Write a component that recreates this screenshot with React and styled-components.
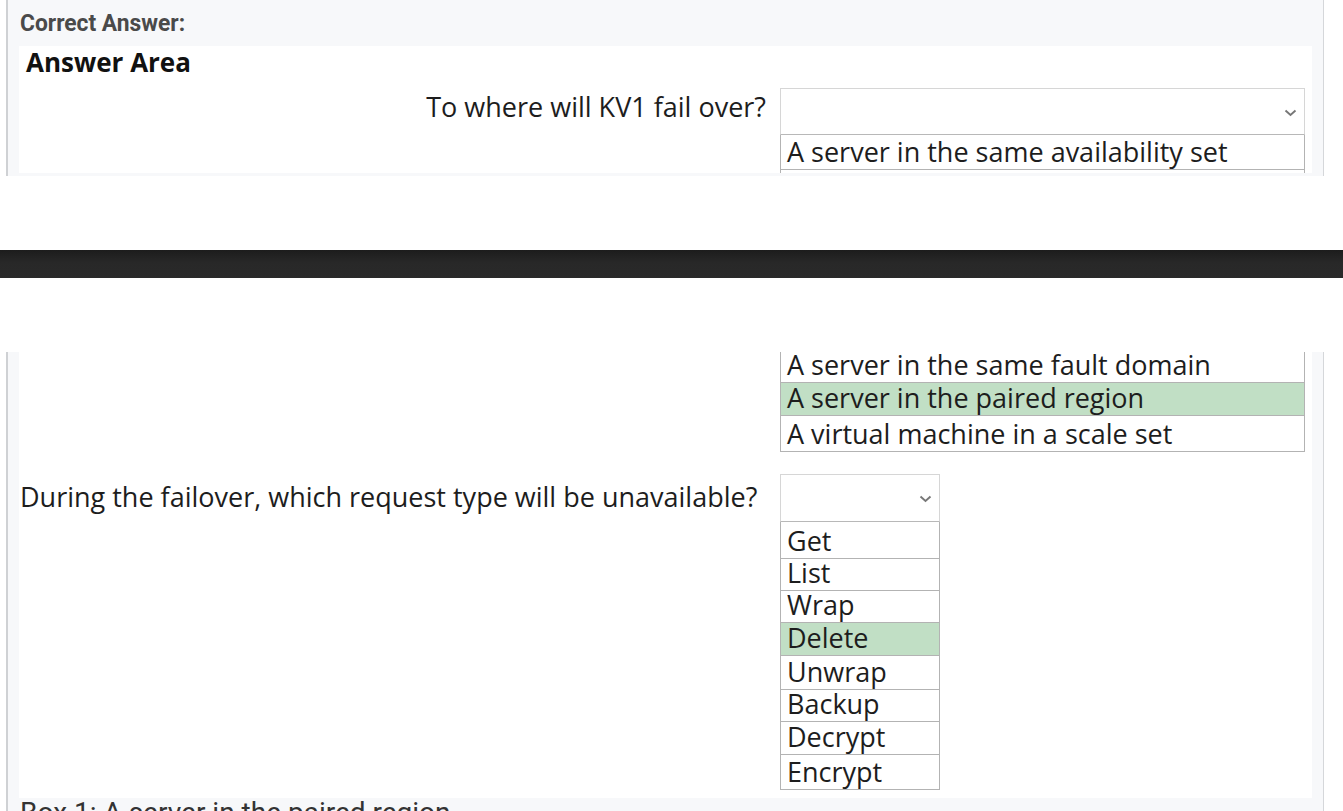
import React from "react";
import styled, { createGlobalStyle } from "styled-components";

const GlobalStyle = createGlobalStyle`
  *, *::before, *::after {
    box-sizing: border-box;
  }
  html, body {
    margin: 0;
    padding: 0;
    background: #ffffff;
    overflow: hidden;
  }
`;

const Page = styled.div`
  width: 1343px;
  height: 811px;
  overflow: hidden;
  font-family: "Open Sans", "Noto Sans", sans-serif;
`;

const Panel = styled.section`
  margin-left: 6px;
  width: 1318px;
  border-left: 2px solid #cfd1d4;
  border-right: 1px solid #d5d7da;
  background: #f7f8fa;
  padding: 0 11px;
`;

const Label = styled.div`
  height: 46px;
  display: flex;
  align-items: center;
  padding-left: 1px;
`;

const LabelText = styled.span`
  display: inline-block;
  font-family: "Roboto", "Liberation Sans", sans-serif;
  font-weight: 700;
  font-size: 24px;
  color: #4a4a4a;
  transform: scaleX(0.95);
  transform-origin: left center;
  white-space: nowrap;
`;

const Shot = styled.div`
  background: #ffffff;
  height: ${(p) => p.$h}px;
  overflow: hidden;
`;

const Heading = styled.h2`
  margin: 0;
  padding: 0 0 0 7px;
  height: 32px;
  line-height: 32px;
  font-family: "Open Sans", sans-serif;
  font-weight: 700;
  font-size: 26px;
  color: #111;
`;

const QuestionRow = styled.div`
  display: grid;
  grid-template-columns: 761px ${(p) => p.$w}px;
  margin-top: ${(p) => p.$top || 0}px;
`;

const Question = styled.div`
  text-align: ${(p) => (p.$left ? "left" : "right")};
  padding: ${(p) => (p.$left ? "0 0 0 1px" : "0 14px 0 0")};
  font-size: 27px;
  color: #1d1d1d;
  line-height: ${(p) => p.$lh}px;
  white-space: nowrap;
`;

const Column = styled.div`
  display: flex;
  flex-direction: column;
`;

const Select = styled.div`
  height: ${(p) => p.$h}px;
  border: 1px solid #d6d6d6;
  border-bottom-color: #b8b8b8;
  background: #fff;
  display: flex;
  align-items: center;
  justify-content: flex-end;
  padding: 2px 7px 0 0;
`;

const List = styled.div`
  border: 1px solid #b3b3b3;
  border-top: none;
  background: #fff;
`;

const Option = styled.div`
  height: ${(p) => p.$h || 33}px;
  border-top: ${(p) => (p.$first ? "none" : "1px solid #b3b3b3")};
  background: ${(p) => (p.$correct ? "#c1dfc5" : "#fff")};
  display: flex;
  align-items: flex-end;
  padding: 0 0 3px 6px;
  font-size: 27px;
  line-height: 28px;
  color: #1d1d1d;
  white-space: nowrap;
  overflow: hidden;
`;

const BottomGap = styled.div`
  height: ${(p) => p.$h}px;
`;

const DarkBar = styled.div`
  height: 28px;
  background: linear-gradient(#1c1c1c, #282828 45%, #2a2a2a);
`;

const Spacer = styled.div`
  height: ${(p) => p.$h}px;
`;

const Caption = styled.div`
  font-family: "Roboto", "Liberation Sans", sans-serif;
  font-size: 28px;
  line-height: 28px;
  color: #333;
  padding: 1px 0 0 1px;
  white-space: nowrap;
`;

const Chevron = () => (
  <svg width="13" height="8" viewBox="0 0 13 8">
    <polyline points="1.5,1.5 6.5,6 11.5,1.5" fill="none" stroke="#777" strokeWidth="1.9" />
  </svg>
);

export default function App() {
  const topOptions = [
    "A server in the same availability set",
    "A server in the same fault domain",
  ];
  const requestTypes = [
    ["Get", 36],
    ["List", 32],
    ["Wrap", 32],
    ["Delete", 33],
    ["Unwrap", 34],
    ["Backup", 32],
    ["Decrypt", 33],
    ["Encrypt", 35],
  ];

  return (
    <Page>
      <GlobalStyle />
      <Panel>
        <Label>
          <LabelText>Correct Answer:</LabelText>
        </Label>
        <Shot $h={127}>
          <Heading>Answer Area</Heading>
          <QuestionRow $w={525} $top={10}>
            <Question $lh={38}>To where will KV1 fail over?</Question>
            <Column>
              <Select $h={47}>
                <Chevron />
              </Select>
              <List>
                {topOptions.map((o, i) => (
                  <Option key={o} $first={i === 0} $h={i === 0 ? 34 : 33}>
                    {o}
                  </Option>
                ))}
              </List>
            </Column>
          </QuestionRow>
        </Shot>
        <BottomGap $h={3} />
      </Panel>
      <Spacer $h={74} />
      <DarkBar />
      <Spacer $h={74} />
      <Panel>
        <Shot $h={446}>
          <QuestionRow $w={525}>
            <div />
            <List>
              <Option $first $h={30}>A server in the same fault domain</Option>
              <Option $correct $h={33}>A server in the paired region</Option>
              <Option $h={36}>A virtual machine in a scale set</Option>
            </List>
          </QuestionRow>
          <QuestionRow $w={160} $top={22}>
            <Question $left $lh={46}>During the failover, which request type will be unavailable?</Question>
            <Column>
              <Select $h={48}>
                <Chevron />
              </Select>
              <List>
                {requestTypes.map(([t, h], i) => (
                  <Option key={t} $first={i === 0} $correct={t === "Delete"} $h={h}>
                    {t}
                  </Option>
                ))}
              </List>
            </Column>
          </QuestionRow>
        </Shot>
        <Caption>Box 1: A server in the paired region</Caption>
      </Panel>
    </Page>
  );
}
